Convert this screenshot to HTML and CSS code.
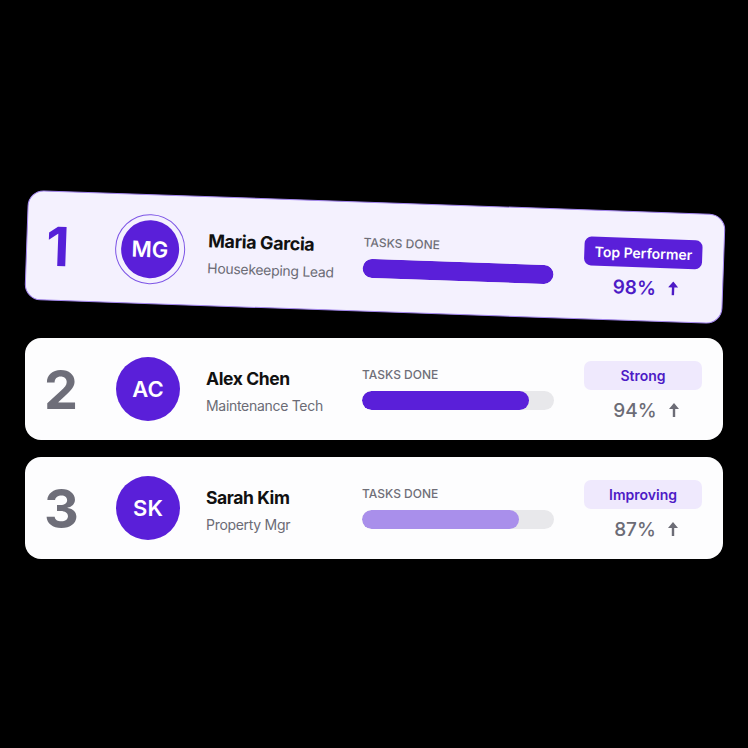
FILE: index.html
```html
<!DOCTYPE html>
<html lang="en">

<head>
  <meta charset="UTF-8" />
  <meta name="viewport" content="width=device-width, initial-scale=1.0" />
  <title>Team Leaderboard</title>
  <link rel="stylesheet" href="styles.css">
</head>

<body>
  <div class="board">
    <!-- Rank 1 -->
    <div class="card card-top">
      <div class="rank">1</div>
      <div class="avatar-ring">
        <div class="avatar">MG</div>
      </div>
      <div class="person">
        <div class="name">Maria Garcia</div>
        <div class="role">Housekeeping Lead</div>
      </div>
      <div class="tasks">
        <div class="tasks-label">TASKS DONE</div>
        <div class="track"><div class="fill" style="width: 100%"></div></div>
      </div>
      <div class="score">
        <div class="badge">Top Performer</div>
        <div class="pct">98%
          <svg class="arrow" viewBox="0 0 10 14"><path d="M5 0 L10 6 L6.2 6 L6.2 14 L3.8 14 L3.8 6 L0 6 Z" /></svg>
        </div>
      </div>
    </div>

    <!-- Rank 2 -->
    <div class="card">
      <div class="rank">2</div>
      <div class="avatar">AC</div>
      <div class="person">
        <div class="name">Alex Chen</div>
        <div class="role">Maintenance Tech</div>
      </div>
      <div class="tasks">
        <div class="tasks-label">TASKS DONE</div>
        <div class="track"><div class="fill" style="width: 87%"></div></div>
      </div>
      <div class="score">
        <div class="badge">Strong</div>
        <div class="pct">94%
          <svg class="arrow" viewBox="0 0 10 14"><path d="M5 0 L10 6 L6.2 6 L6.2 14 L3.8 14 L3.8 6 L0 6 Z" /></svg>
        </div>
      </div>
    </div>

    <!-- Rank 3 -->
    <div class="card">
      <div class="rank">3</div>
      <div class="avatar">SK</div>
      <div class="person">
        <div class="name">Sarah Kim</div>
        <div class="role">Property Mgr</div>
      </div>
      <div class="tasks">
        <div class="tasks-label">TASKS DONE</div>
        <div class="track"><div class="fill fill-light" style="width: 82%"></div></div>
      </div>
      <div class="score">
        <div class="badge">Improving</div>
        <div class="pct">87%
          <svg class="arrow" viewBox="0 0 10 14"><path d="M5 0 L10 6 L6.2 6 L6.2 14 L3.8 14 L3.8 6 L0 6 Z" /></svg>
        </div>
      </div>
    </div>
  </div>
</body>

</html>
```

FILE: styles.css
```css
/* page */
body {
  margin: 0;
  background: #000;
  font-family: Inter, "Noto Sans", sans-serif;
}

.board {
  width: 698px;
  padding: 217px 0 0 25px;
  display: flex;
  flex-direction: column;
  gap: 17px;
}

/* card row */
.card {
  height: 102px;
  box-sizing: border-box;
  background: #fdfdfe;
  border-radius: 16px;
  padding: 0 21px 0 19px;
  display: flex;
  align-items: center;
}

/* first place card is tilted and highlighted */
.card-top {
  height: 110px;
  margin-bottom: -6px;
  background: #f4f1fe;
  border: 1.5px solid #a487ef;
  transform: translate(1px, -15px) rotate(2deg);
}

.rank {
  width: 72px;
  font-size: 54px;
  font-weight: 700;
  color: #6e6e79;
  line-height: 1;
  margin-top: 2px;
}

.card-top .rank {
  color: #5520d8;
}

/* avatar */
.avatar {
  width: 64px;
  height: 64px;
  border-radius: 50%;
  background: #5a1fd9;
  color: #fff;
  font-size: 22px;
  font-weight: 600;
  display: flex;
  align-items: center;
  justify-content: center;
  flex-shrink: 0;
}

.avatar-ring {
  width: 70px;
  height: 70px;
  margin: 0 -3px;
  box-sizing: border-box;
  border: 1.5px solid #7d55e6;
  border-radius: 50%;
  display: flex;
  align-items: center;
  justify-content: center;
  flex-shrink: 0;
}

.avatar-ring .avatar {
  width: 58px;
  height: 58px;
}

/* name */
.person {
  width: 156px;
  margin-left: 26px;
  margin-top: 3px;
}

.name {
  font-size: 17.5px;
  font-weight: 700;
  color: #111;
  letter-spacing: -0.4px;
}

.card-top .name {
  font-size: 18px;
}

.role {
  margin-top: 8px;
  font-size: 14px;
  color: #6b6b75;
  letter-spacing: -0.3px;
}

/* tasks bar */
.tasks {
  width: 192px;
  margin-top: -2px;
}

.tasks-label {
  font-size: 12px;
  font-weight: 500;
  color: #6f6f78;
  margin-bottom: 9px;
}

.track {
  height: 19px;
  border-radius: 10px;
  background: #e8e8eb;
  overflow: hidden;
}

.fill {
  height: 100%;
  border-radius: 10px;
  background: #5a1fd9;
}

.fill-light {
  background: #a98feb;
}

/* score */
.score {
  width: 118px;
  margin-left: 30px;
  display: flex;
  flex-direction: column;
  align-items: center;
  margin-top: 4px;
}

.badge {
  width: 100%;
  height: 29px;
  border-radius: 7px;
  background: #efe9fd;
  color: #4d1bc6;
  font-size: 14px;
  font-weight: 600;
  display: flex;
  align-items: center;
  justify-content: center;
}

.card-top .badge {
  background: #5a1fd9;
  color: #fff;
}

.pct {
  margin-top: 9px;
  font-size: 19px;
  font-weight: 500;
  color: #6c6c76;
  display: flex;
  align-items: center;
  gap: 12px;
  padding-left: 6px;
}

.card-top .pct {
  color: #4d1bc6;
  font-weight: 600;
}

.arrow {
  width: 10px;
  height: 14px;
  fill: #6c6c76;
}

.card-top .arrow {
  fill: #4d1bc6;
}
```
